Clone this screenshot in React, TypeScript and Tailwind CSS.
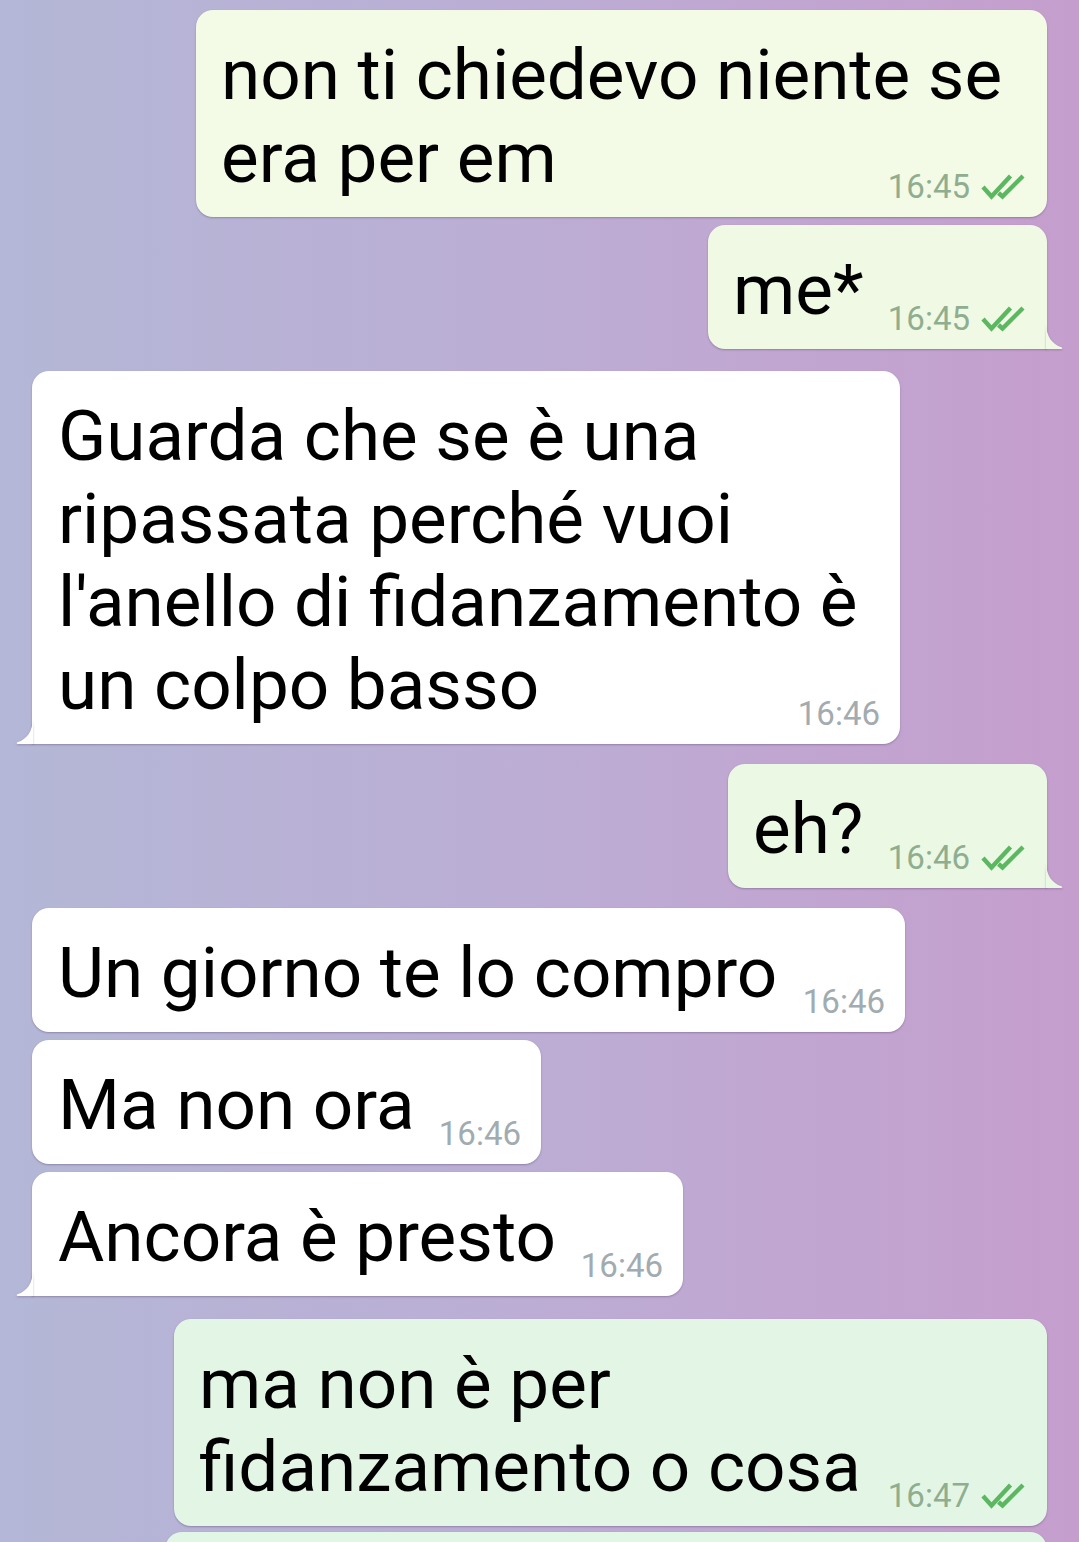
import React from 'react';

type Msg = {
  out: boolean;
  lines: string[];
  time: string;
  width: string;
  mt: string;
  bg: string;
  fill: string;
  tail?: boolean;
};

const messages: Msg[] = [
  { out: true, lines: ['non ti chiedevo niente se', 'era per em'], time: '16:45', width: 'w-[851px]', mt: 'mt-[10px]', bg: 'bg-[#f3fae6]', fill: '#f3fae6' },
  { out: true, lines: ['me*'], time: '16:45', width: 'w-[339px]', mt: 'mt-[8px]', bg: 'bg-[#f0f9e4]', fill: '#f0f9e4', tail: true },
  {
    out: false,
    lines: ['Guarda che se è una', 'ripassata perché vuoi', "l'anello di fidanzamento è", 'un colpo basso'],
    time: '16:46',
    width: 'w-[868px]',
    mt: 'mt-[22px]',
    bg: 'bg-white',
    fill: '#ffffff',
    tail: true,
  },
  { out: true, lines: ['eh?'], time: '16:46', width: 'w-[319px]', mt: 'mt-[20px]', bg: 'bg-[#eaf8e4]', fill: '#eaf8e4', tail: true },
  { out: false, lines: ['Un giorno te lo compro'], time: '16:46', width: 'w-[873px]', mt: 'mt-[20px]', bg: 'bg-white', fill: '#ffffff' },
  { out: false, lines: ['Ma non ora'], time: '16:46', width: 'w-[509px]', mt: 'mt-[8px]', bg: 'bg-white', fill: '#ffffff' },
  { out: false, lines: ['Ancora è presto'], time: '16:46', width: 'w-[651px]', mt: 'mt-[8px]', bg: 'bg-white', fill: '#ffffff', tail: true },
  { out: true, lines: ['ma non è per', 'fidanzamento o cosa'], time: '16:47', width: 'w-[873px]', mt: 'mt-[23px]', bg: 'bg-[#e3f6e5]', fill: '#e3f6e5' },
];

const DoubleCheck = () => (
  <svg width="46" height="27" viewBox="0 0 46 27" fill="none" className="ml-[11px] mb-[2px]">
    <path d="M2 14 L10.5 23.5 L29.5 3" stroke="#5cb761" strokeWidth="4.4" />
    <path d="M17.5 20 L21.5 23.5 L42 3" stroke="#5cb761" strokeWidth="4.4" />
  </svg>
);

const Tail = ({ fill, out }: { fill: string; out: boolean }) => (
  <svg
    width="18"
    height="26"
    viewBox="0 0 18 26"
    className={
      out
        ? 'absolute bottom-0 left-full -ml-px drop-shadow-[0_1px_1px_rgba(70,50,90,0.3)]'
        : 'absolute bottom-0 right-full -mr-px -scale-x-100 drop-shadow-[0_1px_1px_rgba(70,50,90,0.3)]'
    }
  >
    <path d="M0 0 C0.5 14 6 21 15.5 24.3 C17 24.8 16.6 26 15 26 L0 26 Z" fill={fill} />
  </svg>
);

const Bubble = ({ m }: { m: Msg }) => {
  const last = m.lines[m.lines.length - 1];
  const rest = m.lines.slice(0, -1);
  return (
    <div className={`flex ${m.out ? 'justify-end pr-[32px]' : 'justify-start pl-[32px]'} ${m.mt}`}>
      <div
        className={`relative ${m.width} ${m.bg} rounded-[17px] ${
          m.tail ? (m.out ? 'rounded-br-none' : 'rounded-bl-none') : ''
        } shadow-[0_1px_2px_rgba(70,50,90,0.35)] ${m.out ? 'pl-[25px]' : 'pl-[26px]'} pr-[20px] pt-[23px] pb-[18px]`}
      >
        {rest.map((l, i) => (
          <div key={i} className="whitespace-nowrap">
            {l}
          </div>
        ))}
        <div className="flex items-end justify-between">
          <span className="whitespace-nowrap">{last}</span>
          <span
            className={`flex items-center text-[33px] leading-[36px] -mb-[6px] ${
              m.out ? 'text-[#8fae90]' : 'text-[#a1abb0]'
            }`}
          >
            {m.time}
            {m.out && <DoubleCheck />}
          </span>
        </div>
        {m.tail && <Tail fill={m.fill} out={m.out} />}
      </div>
    </div>
  );
};

export default function App() {
  return (
    <div className="h-[1542px] w-[1079px] overflow-hidden bg-linear-to-r from-[#b4b7d7] via-[#bcadd4] to-[#c59ecd] font-[Roboto,sans-serif] text-[71px] leading-[83px] text-black">
      <div className="flex flex-col">
        {messages.map((m, i) => (
          <Bubble key={i} m={m} />
        ))}
        {/* next message, only its top edge is on screen */}
        <div className="flex justify-end pr-[32px] mt-[6px]">
          <div className="w-[882px] h-[124px] rounded-[17px] bg-[#e2f6e5] shadow-[0_1px_2px_rgba(70,50,90,0.35)]" />
        </div>
      </div>
    </div>
  );
}
